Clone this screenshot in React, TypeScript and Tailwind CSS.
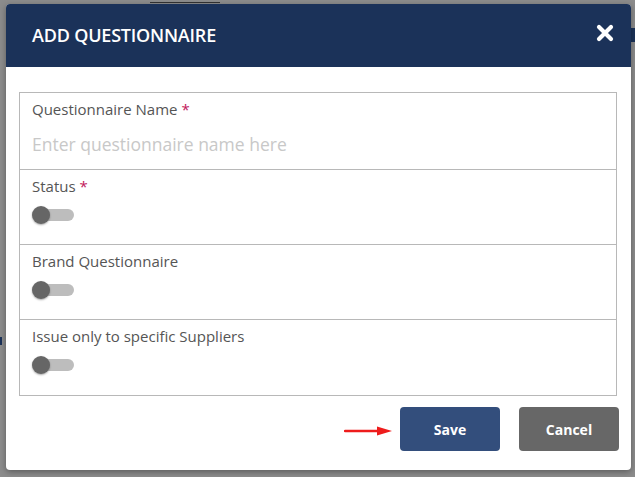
import React from 'react';

function Toggle() {
  return (
    <div className="mt-[10px] flex h-[18px] w-[42px] items-center">
      <div className="z-10 h-[18px] w-[18px] shrink-0 rounded-full bg-[#666666] shadow-[0_1px_2px_rgba(0,0,0,0.35)]" />
      <div className="-ml-[14px] h-[12px] w-[38px] rounded-full bg-[#bdbdbd]" />
    </div>
  );
}

function Row({ label, required, children, last, tall }: { label: string; required?: boolean; children: React.ReactNode; last?: boolean; tall?: boolean }) {
  return (
    <div className={`px-[12px] pt-[6px] ${last ? '' : 'border-b border-[#b8b8b8]'} ${tall ? 'h-[77px]' : 'h-[75px]'}`}>
      <div className="text-[15px] leading-[20px] text-[#555555]">
        {label}
        {required && <span className="ml-[4px] text-[#c2185b]">*</span>}
      </div>
      {children}
    </div>
  );
}

export default function App() {
  return (
    <div
      className="relative h-[477px] w-[635px] overflow-hidden bg-[#8c8c8c] pl-[6px] pt-[4px]"
      style={{ fontFamily: '"Open Sans", "Noto Sans", sans-serif' }}
    >
      {/* faint page underneath the overlay */}
      <div className="absolute left-[150px] top-0 h-[3px] w-[70px] border-b border-[#333]" />
      <div className="absolute right-0 top-[28px] h-[14px] w-[4px] bg-[#1b3259]" />
      <div className="absolute left-0 top-[337px] h-[8px] w-[2px] bg-[#1b3259]" />

      <div className="relative flex h-[466px] w-[625px] flex-col overflow-hidden rounded-[4px] bg-white shadow-[0_2px_6px_rgba(0,0,0,0.35)]">
        <div className="flex h-[63px] shrink-0 items-center justify-between bg-[#1b3259] pl-[26px] pr-[17px]">
          <h1 className="text-[18px] font-semibold tracking-[-0.2px] text-white">ADD QUESTIONNAIRE</h1>
          <svg width="18" height="18" viewBox="0 0 18 18" className="mb-[6px]">
            <path d="M3 3 L15 15 M15 3 L3 15" stroke="white" strokeWidth="4.2" strokeLinecap="round" />
          </svg>
        </div>

        <div className="flex flex-1 flex-col pl-[13px] pr-[14px] pt-[25px]">
          <div className="border border-[#b8b8b8]">
            <Row label="Questionnaire Name" required tall>
              <input
                className="mt-[13px] w-full bg-transparent text-[17.5px] leading-[24px] text-[#555] outline-none placeholder:text-[#c8c8c8]"
                placeholder="Enter questionnaire name here"
              />
            </Row>
            <Row label="Status" required>
              <Toggle />
            </Row>
            <Row label="Brand Questionnaire">
              <Toggle />
            </Row>
            <Row label="Issue only to specific Suppliers" last>
              <Toggle />
            </Row>
          </div>

          <div className="mt-[11px] flex items-center justify-end">
            <svg width="50" height="12" viewBox="0 0 50 12" className="mr-[6px] mt-[3px]">
              <path d="M1 6 H36" stroke="#ee1c1c" strokeWidth="2.5" strokeLinecap="round" />
              <path d="M33 1.5 L48 6 L33 10.5 Z" fill="#ee1c1c" />
            </svg>
            <button className="h-[44px] w-[100px] rounded-[4px] bg-[#334e7c] text-[14px] font-bold text-white">Save</button>
            <button className="ml-[19px] mr-[-2px] h-[44px] w-[100px] rounded-[4px] bg-[#676767] text-[14px] font-bold text-white">Cancel</button>
          </div>
        </div>
      </div>
    </div>
  );
}
